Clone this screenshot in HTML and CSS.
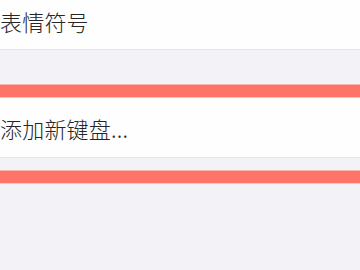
FILE: index.html
```html
<!DOCTYPE html>
<html>
<head>
<meta charset="utf-8">
<link rel="stylesheet" href="styles.css">
</head>
<body>
<div class="page">
  <div class="row row-first"><span class="label">表情符号</span></div>
  <div class="gap"></div>
  <div class="bar"></div>
  <div class="row"><span class="label">添加新键盘...</span></div>
  <div class="gap gap-small"></div>
  <div class="bar"></div>
</div>
</body>
</html>
```
FILE: styles.css
```css
html, body {
  margin: 0;
  padding: 0;
  background: #f2f2f7;
}
.page {
  width: 360px;
  height: 270px;
  display: flex;
  flex-direction: column;
  overflow: hidden;
  font-family: "Noto Sans CJK SC", "Noto Sans", sans-serif;
}
.row {
  background: #fefefe;
  height: 59px;
  display: flex;
  align-items: center;
  border-bottom: 1px solid #e3e3e8;
  flex-shrink: 0;
}
.row-first {
  height: 49px;
  align-items: flex-start;
}
.row-first .label {
  margin-top: 6px;
}
.label {
  font-size: 22px;
  font-weight: 300;
  color: #262626;
  line-height: 30px;
  letter-spacing: 0.2px;
}
.gap {
  height: 34px;
  flex-shrink: 0;
}
.gap-small {
  height: 12px;
}
.bar {
  height: 12px;
  background: #ff7469;
  border-top: 1px solid #fbb4ac;
  border-bottom: 1px solid #fbc6c0;
  flex-shrink: 0;
}
```
